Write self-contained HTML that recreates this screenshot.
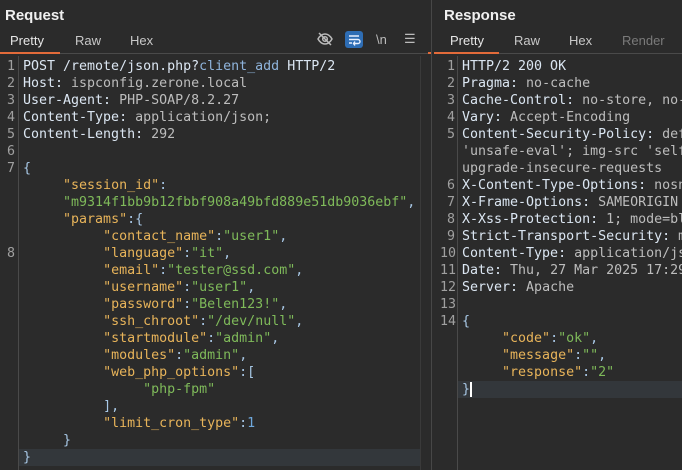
<!DOCTYPE html>
<html><head><style>
*{margin:0;padding:0;box-sizing:border-box}
body{width:682px;height:470px;background:#2b2b2b;position:relative;overflow:hidden;font-family:"Liberation Sans",sans-serif;color:#d8d8d8}
.a{position:absolute;white-space:pre}
.h{font-weight:bold;font-size:15px;color:#f0f0f0}
.t{font-size:13px;color:#c8c8c8}
.code{font-family:"DejaVu Sans Mono","Liberation Mono",monospace;font-size:13.3px;line-height:17px}
.n{color:#a0a0a0;text-align:right;width:14px}
.hn{color:#dbe6f2}.hv{color:#bdbdbd}
.k{color:#e8b45a}.s{color:#7fba5a}.p{color:#a8c8e6}.num{color:#6fa8dc}
</style></head><body>
<div class="a h" style="left:5px;top:7px">Request</div>
<div class="a t" style="left:10px;top:33px;color:#e6e6e6">Pretty</div>
<div class="a t" style="left:75px;top:33px">Raw</div>
<div class="a t" style="left:130px;top:33px">Hex</div>
<div class="a" style="left:0;top:52px;width:60px;height:2px;background:#e36b3a"></div>
<div class="a" style="left:60px;top:53px;width:368px;height:1px;background:#4a4a4a"></div>
<svg class="a" style="left:316px;top:30px" width="18" height="18" viewBox="0 0 18 18" fill="none" stroke="#bbb" stroke-width="1.5"><path d="M2 9c2-3.5 4.5-5 7-5s5 1.5 7 5c-2 3.5-4.5 5-7 5s-5-1.5-7-5z"/><circle cx="9" cy="9" r="2.3"/><path d="M3 3l12 12"/></svg>
<div class="a" style="left:345px;top:31px;width:18px;height:17px;background:#2e6db4;border-radius:3px"></div>
<svg class="a" style="left:345px;top:31px" width="18" height="17" viewBox="0 0 18 17" fill="none" stroke="#e8f0ff" stroke-width="1.4"><path d="M4 5h10M4 8.5h9a2 2 0 010 4h-4M4 12h3M10 10.5l-1.5 2 1.5 2"/></svg>
<div class="a t" style="left:376px;top:32px;color:#bbb">\n</div>
<div class="a t" style="left:404px;top:31px;color:#bbb">☰</div>
<div class="a" style="left:431px;top:0;width:1px;height:470px;background:#474747"></div>
<div class="a" style="left:420px;top:56px;width:1px;height:414px;background:#3a3a3a"></div>
<div class="a" style="left:428px;top:52px;width:3px;height:2px;background:#e36b3a"></div>

<div class="a h" style="left:444px;top:7px">Response</div>
<div class="a t" style="left:450px;top:33px;color:#e6e6e6">Pretty</div>
<div class="a t" style="left:514px;top:33px">Raw</div>
<div class="a t" style="left:569px;top:33px">Hex</div>
<div class="a t" style="left:622px;top:33px;color:#7a7a7a">Render</div>
<div class="a" style="left:434px;top:52px;width:65px;height:2px;background:#e36b3a"></div>
<div class="a" style="left:499px;top:53px;width:183px;height:1px;background:#4a4a4a"></div>

<div class="a" style="left:18px;top:56px;width:1px;height:414px;background:#4a4a4a"></div>
<div class="a" style="left:457px;top:56px;width:1px;height:414px;background:#4a4a4a"></div>
<div class="a" style="left:19px;top:449px;width:401px;height:17px;background:#33373b"></div>
<div class="a" style="left:458px;top:381px;width:224px;height:17px;background:#33373b"></div>
<div class="a" style="left:470px;top:382px;width:2px;height:15px;background:#fff"></div>

<div class="a code n" style="left:1px;top:58px">1
2
3
4
5
6
7




8</div>
<div class="a code" style="left:23px;top:58px"><span class="hn">POST /remote/json.php?</span><span style="color:#8fb4dc">client_add</span><span class="hn"> HTTP/2</span>
<span class="hn">Host:</span><span class="hv"> ispconfig.zerone.local</span>
<span class="hn">User-Agent:</span><span class="hv"> PHP-SOAP/8.2.27</span>
<span class="hn">Content-Type:</span><span class="hv"> application/json;</span>
<span class="hn">Content-Length:</span><span class="hv"> 292</span>

<span class="p">{</span>
     <span class="k">"session_id"</span><span class="p">:</span>
     <span class="s">"m9314f1bb9b12fbbf908a49bfd889e51db9036ebf"</span><span class="p">,</span>
     <span class="k">"params"</span><span class="p">:{</span>
          <span class="k">"contact_name"</span><span class="p">:</span><span class="s">"user1"</span><span class="p">,</span>
          <span class="k">"language"</span><span class="p">:</span><span class="s">"it"</span><span class="p">,</span>
          <span class="k">"email"</span><span class="p">:</span><span class="s">"tester@ssd.com"</span><span class="p">,</span>
          <span class="k">"username"</span><span class="p">:</span><span class="s">"user1"</span><span class="p">,</span>
          <span class="k">"password"</span><span class="p">:</span><span class="s">"Belen123!"</span><span class="p">,</span>
          <span class="k">"ssh_chroot"</span><span class="p">:</span><span class="s">"/dev/null"</span><span class="p">,</span>
          <span class="k">"startmodule"</span><span class="p">:</span><span class="s">"admin"</span><span class="p">,</span>
          <span class="k">"modules"</span><span class="p">:</span><span class="s">"admin"</span><span class="p">,</span>
          <span class="k">"web_php_options"</span><span class="p">:[</span>
               <span class="s">"php-fpm"</span>
          <span class="p">],</span>
          <span class="k">"limit_cron_type"</span><span class="p">:</span><span class="num">1</span>
     <span class="p">}</span>
<span class="p">}</span></div>

<div class="a code n" style="left:440px;top:58px;width:15px">1
2
3
4
5


6
7
8
9
10
11
12
13
14</div>
<div class="a" style="left:462px;top:58px;width:220px;height:360px;overflow:hidden">
<div class="a code" style="left:0;top:0"><span class="hn">HTTP/2 200 OK</span>
<span class="hn">Pragma:</span><span class="hv"> no-cache</span>
<span class="hn">Cache-Control:</span><span class="hv"> no-store, no-cache</span>
<span class="hn">Vary:</span><span class="hv"> Accept-Encoding</span>
<span class="hn">Content-Security-Policy:</span><span class="hv"> default</span>
<span class="hv">'unsafe-eval'; img-src 'self'</span>
<span class="hv">upgrade-insecure-requests</span>
<span class="hn">X-Content-Type-Options:</span><span class="hv"> nosniff</span>
<span class="hn">X-Frame-Options:</span><span class="hv"> SAMEORIGIN</span>
<span class="hn">X-Xss-Protection:</span><span class="hv"> 1; mode=block</span>
<span class="hn">Strict-Transport-Security:</span><span class="hv"> max</span>
<span class="hn">Content-Type:</span><span class="hv"> application/json</span>
<span class="hn">Date:</span><span class="hv"> Thu, 27 Mar 2025 17:29</span>
<span class="hn">Server:</span><span class="hv"> Apache</span>

<span class="p">{</span>
     <span class="k">"code"</span><span class="p">:</span><span class="s">"ok"</span><span class="p">,</span>
     <span class="k">"message"</span><span class="p">:</span><span class="s">""</span><span class="p">,</span>
     <span class="k">"response"</span><span class="p">:</span><span class="s">"2"</span>
<span class="p">}</span></div>
</div>
<div class="a" style="left:470px;top:382px;width:2px;height:15px;background:#fff"></div>
</body></html>
